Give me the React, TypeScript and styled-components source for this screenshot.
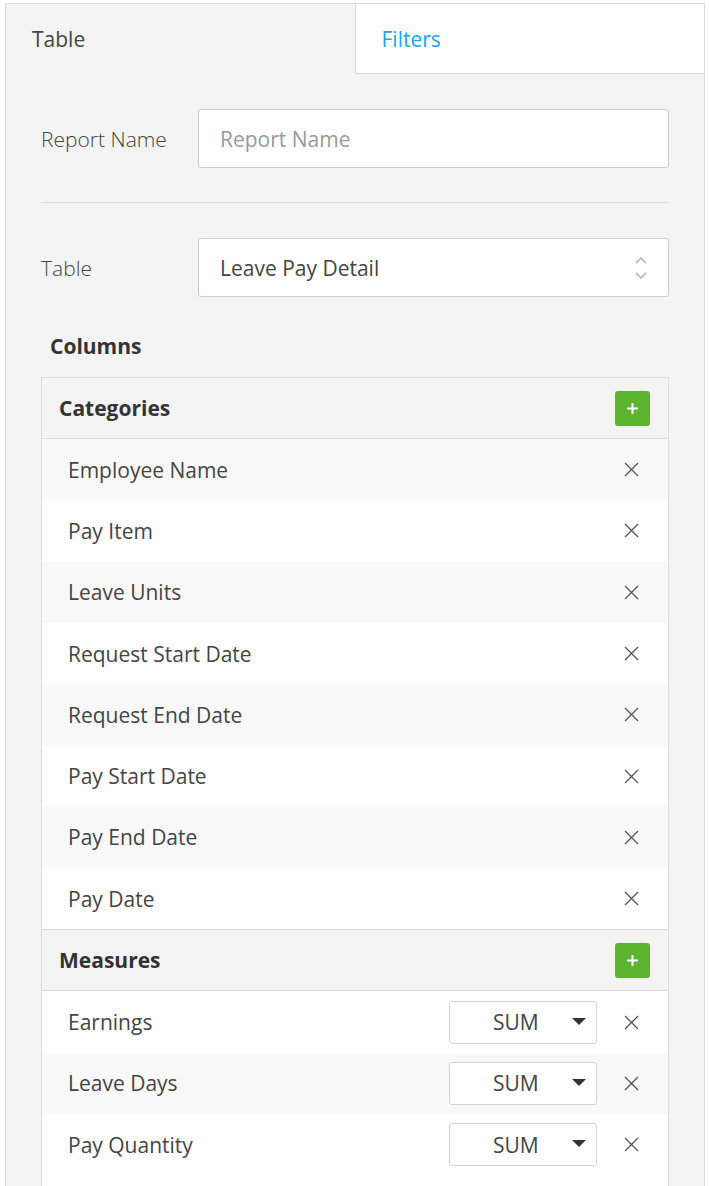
import React from 'react'
import styled, { createGlobalStyle } from 'styled-components'

const GlobalStyle = createGlobalStyle`
  html, body {
    margin: 0;
    padding: 0;
    background: #ffffff;
    font-family: 'Open Sans', 'Liberation Sans', sans-serif;
    color: #333;
  }
`

const Panel = styled.div`
  margin: 3px 4px 0 5px;
  border: 1px solid #dddddd;
  border-bottom: none;
  background: #f3f3f3;
  height: 1190px;
  overflow: hidden;
`

const Tabs = styled.div`
  display: flex;
  height: 70px;
`

const Tab = styled.div<{ active?: boolean }>`
  flex: 1;
  display: flex;
  align-items: center;
  padding-left: 26px;
  font-size: 21px;
  color: ${(p) => (p.active ? '#444' : '#1ba6e6')};
  background: ${(p) => (p.active ? 'transparent' : '#ffffff')};
  border-left: ${(p) => (p.active ? 'none' : '1px solid #dddddd')};
  border-bottom: ${(p) => (p.active ? 'none' : '1px solid #dddddd')};
`

const Body = styled.div`
  padding: 35px 35px 0 35px;
`

const FormRow = styled.div`
  display: flex;
  align-items: center;
`

const Label = styled.div`
  width: 157px;
  font-size: 21px;
  font-weight: 300;
  color: #444;
`

const Input = styled.div<{ placeholder?: boolean }>`
  flex: 1;
  height: 57px;
  background: #fff;
  border: 1px solid #cccccc;
  border-radius: 3px;
  display: flex;
  align-items: center;
  justify-content: space-between;
  padding: 0 20px 0 21px;
  font-size: 21px;
  color: ${(p) => (p.placeholder ? '#999' : '#444')};
`

const Divider = styled.hr`
  border: none;
  border-top: 1px solid #dddddd;
  margin: 34px 0 35px 0;
`

const SectionTitle = styled.div`
  font-weight: 700;
  font-size: 21px;
  color: #333;
  padding-left: 9px;
  margin: 34px 0 16px 0;
  line-height: 30px;
`

const Card = styled.div`
  border: 1px solid #dddddd;
  border-bottom: none;
  background: #fff;
  padding-bottom: 30px;
`

const CardHeader = styled.div`
  height: 60px;
  display: flex;
  align-items: center;
  justify-content: space-between;
  padding: 0 18px 0 17px;
  background: #f3f3f3;
  border-bottom: 1px solid #dddddd;
  font-weight: 700;
  font-size: 21px;
  color: #333;
  &:not(:first-child) {
    border-top: 1px solid #dddddd;
  }
`

const AddButton = styled.div`
  width: 35px;
  height: 35px;
  border-radius: 3px;
  background: #5db42f;
  display: flex;
  align-items: center;
  justify-content: center;
`

const Row = styled.div<{ odd: boolean }>`
  height: 61.3px;
  display: flex;
  align-items: center;
  padding: 0 0 0 26px;
  background: ${(p) => (p.odd ? '#f8f8f8' : '#ffffff')};
  font-size: 21px;
  color: #444;
`

const RowText = styled.div`
  flex: 1;
`

const Remove = styled.div`
  box-sizing: border-box;
  width: 71px;
  padding-left: 27px;
  display: flex;
  align-items: center;
`

const AggSelect = styled.div`
  box-sizing: border-box;
  width: 148px;
  height: 43px;
  border: 1px solid #d4d4d4;
  border-radius: 3px;
  background: #fff;
  display: flex;
  align-items: center;
  position: relative;
  font-size: 21px;
  color: #444;
  padding-left: 43px;
`

const Caret = styled.div`
  position: absolute;
  right: 10px;
  top: 16px;
  width: 0;
  height: 0;
  border-left: 7px solid transparent;
  border-right: 7px solid transparent;
  border-top: 7px solid #333;
`

const CloseIcon = () => (
  <svg width="15" height="15" viewBox="0 0 15 15">
    <path d="M1 1 L14 14 M14 1 L1 14" stroke="#555" strokeWidth="1.3" fill="none" />
  </svg>
)

const PlusIcon = () => (
  <svg width="13" height="13" viewBox="0 0 13 13">
    <path d="M6.5 1 V12 M1 6.5 H12" stroke="#fff" strokeWidth="2" fill="none" />
  </svg>
)

const UpDown = () => (
  <svg width="14" height="26" viewBox="0 0 14 26">
    <path d="M2 8 L7 3 L12 8" stroke="#bdbdbd" strokeWidth="1.8" fill="none" />
    <path d="M2 18 L7 23 L12 18" stroke="#bdbdbd" strokeWidth="1.8" fill="none" />
  </svg>
)

const categories = [
  'Employee Name',
  'Pay Item',
  'Leave Units',
  'Request Start Date',
  'Request End Date',
  'Pay Start Date',
  'Pay End Date',
  'Pay Date',
]

const measures = ['Earnings', 'Leave Days', 'Pay Quantity']

export default function App() {
  return (
    <>
      <GlobalStyle />
      <Panel>
        <Tabs>
          <Tab active>Table</Tab>
          <Tab>Filters</Tab>
        </Tabs>
        <Body>
          <FormRow>
            <Label>Report Name</Label>
            <Input placeholder>Report Name</Input>
          </FormRow>
          <Divider />
          <FormRow>
            <Label>Table</Label>
            <Input>
              <span>Leave Pay Detail</span>
              <UpDown />
            </Input>
          </FormRow>
          <SectionTitle>Columns</SectionTitle>
          <Card>
            <CardHeader>
              Categories
              <AddButton>
                <PlusIcon />
              </AddButton>
            </CardHeader>
            {categories.map((c, i) => (
              <Row key={c} odd={i % 2 === 0}>
                <RowText>{c}</RowText>
                <Remove>
                  <CloseIcon />
                </Remove>
              </Row>
            ))}
            <CardHeader>
              Measures
              <AddButton>
                <PlusIcon />
              </AddButton>
            </CardHeader>
            {measures.map((m, i) => (
              <Row key={m} odd={i % 2 === 1}>
                <RowText>{m}</RowText>
                <AggSelect>
                  SUM
                  <Caret />
                </AggSelect>
                <Remove>
                  <CloseIcon />
                </Remove>
              </Row>
            ))}
          </Card>
        </Body>
      </Panel>
    </>
  )
}
